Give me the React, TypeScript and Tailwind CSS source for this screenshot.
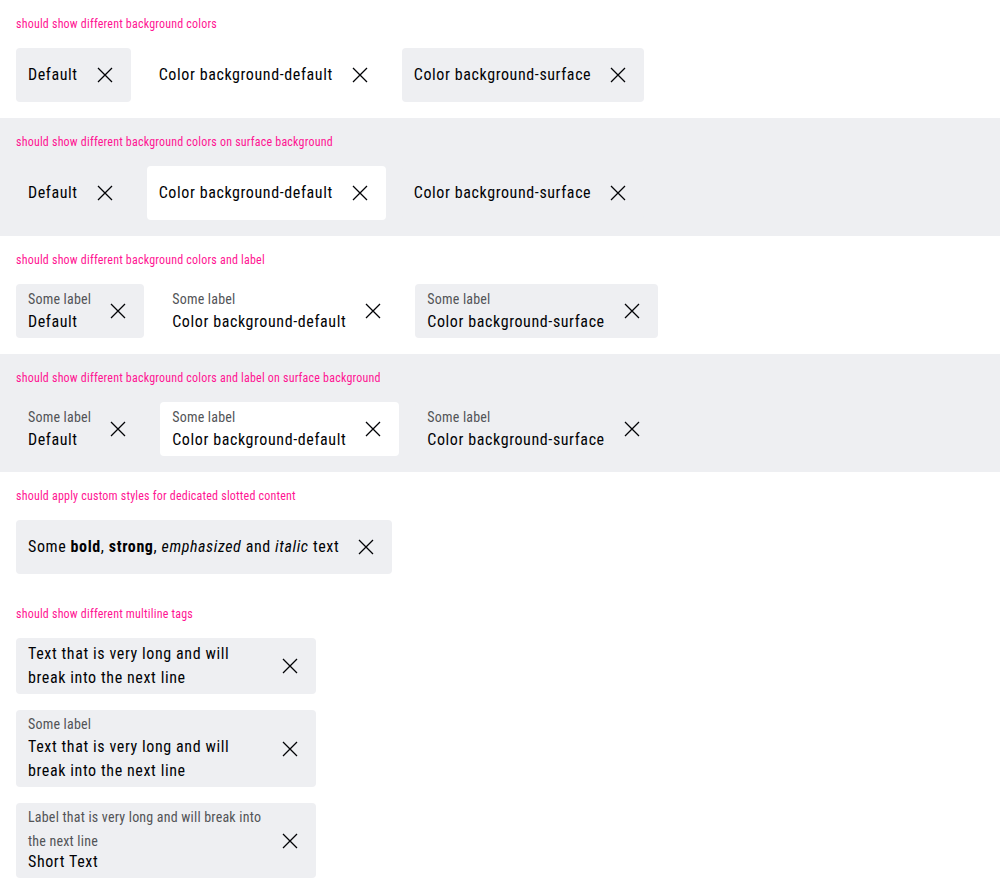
import React from 'react';

type TagBg = 'default' | 'white' | 'surface' | 'none';

const bgClass: Record<TagBg, string> = {
  default: 'bg-[#eeeff2]',
  white: 'bg-white',
  surface: 'bg-[#eeeff2]',
  none: 'bg-transparent',
};

const CloseIcon = () => (
  <svg width="16" height="16" viewBox="0 0 16 16" fill="none" aria-hidden="true">
    <path d="M1 1L15 15M15 1L1 15" stroke="#010205" strokeWidth="1.3" />
  </svg>
);

const Tag = ({
  bg,
  label,
  children,
  className = '',
}: {
  bg: TagBg;
  label?: React.ReactNode;
  children: React.ReactNode;
  className?: string;
}) => (
  <div className={`flex items-center gap-1.5 rounded-[4px] py-1 pl-3 pr-[5px] ${bgClass[bg]} ${className}`}>
    <div className="flex min-w-0 flex-1 flex-col">
      {label && (
        <span className="text-[14px] leading-[21px] tracking-[0.2px] text-[#535457]">{label}</span>
      )}
      <span className="text-[16px] leading-6 tracking-[0.6px] text-[#010205]">{children}</span>
    </div>
    <button type="button" className="flex h-[46px] w-[42px] shrink-0 items-center justify-center">
      <CloseIcon />
    </button>
  </div>
);

const Section = ({
  title,
  surface,
  children,
}: {
  title: string;
  surface?: boolean;
  children: React.ReactNode;
}) => (
  <div className={`p-4 ${surface ? 'bg-[#eeeff2]' : 'bg-white'}`}>
    <p className="mb-4 text-[12px] leading-4 tracking-[0.2px] text-[#ff1493]">{title}</p>
    {children}
  </div>
);

export default function App() {
  return (
    <div className="min-h-screen bg-white font-['Roboto_Condensed','Liberation_Sans_Narrow',sans-serif]">
      <Section title="should show different background colors">
        <div className="flex items-start gap-4">
          <Tag bg="default">Default</Tag>
          <Tag bg="white">Color background-default</Tag>
          <Tag bg="surface">Color background-surface</Tag>
        </div>
      </Section>

      <Section title="should show different background colors on surface background" surface>
        <div className="flex items-start gap-4">
          <Tag bg="none">Default</Tag>
          <Tag bg="white">Color background-default</Tag>
          <Tag bg="surface">Color background-surface</Tag>
        </div>
      </Section>

      <Section title="should show different background colors and label">
        <div className="flex items-start gap-4">
          <Tag bg="default" label="Some label">Default</Tag>
          <Tag bg="white" label="Some label">Color background-default</Tag>
          <Tag bg="surface" label="Some label">Color background-surface</Tag>
        </div>
      </Section>

      <Section title="should show different background colors and label on surface background" surface>
        <div className="flex items-start gap-4">
          <Tag bg="none" label="Some label">Default</Tag>
          <Tag bg="white" label="Some label">Color background-default</Tag>
          <Tag bg="surface" label="Some label">Color background-surface</Tag>
        </div>
      </Section>

      <Section title="should apply custom styles for dedicated slotted content">
        <div className="flex items-start">
          <Tag bg="default">
            Some <b className="font-bold">bold</b>, <strong className="font-bold">strong</strong>,{' '}
            <em className="italic">emphasized</em> and <i className="italic">italic</i> text
          </Tag>
        </div>
      </Section>

      <Section title="should show different multiline tags">
        <div className="flex flex-col items-start gap-4">
          <Tag bg="default" className="w-[300px]">
            Text that is very long and will break into the next line
          </Tag>
          <Tag bg="default" className="w-[300px]" label="Some label">
            Text that is very long and will break into the next line
          </Tag>
          <Tag
            bg="default"
            className="w-[300px]"
            label={
              <span className="-mt-[2px] -mb-[3px] block leading-6">
                Label that is very long and will break into the next line
              </span>
            }
          >
            Short Text
          </Tag>
        </div>
      </Section>
    </div>
  );
}
